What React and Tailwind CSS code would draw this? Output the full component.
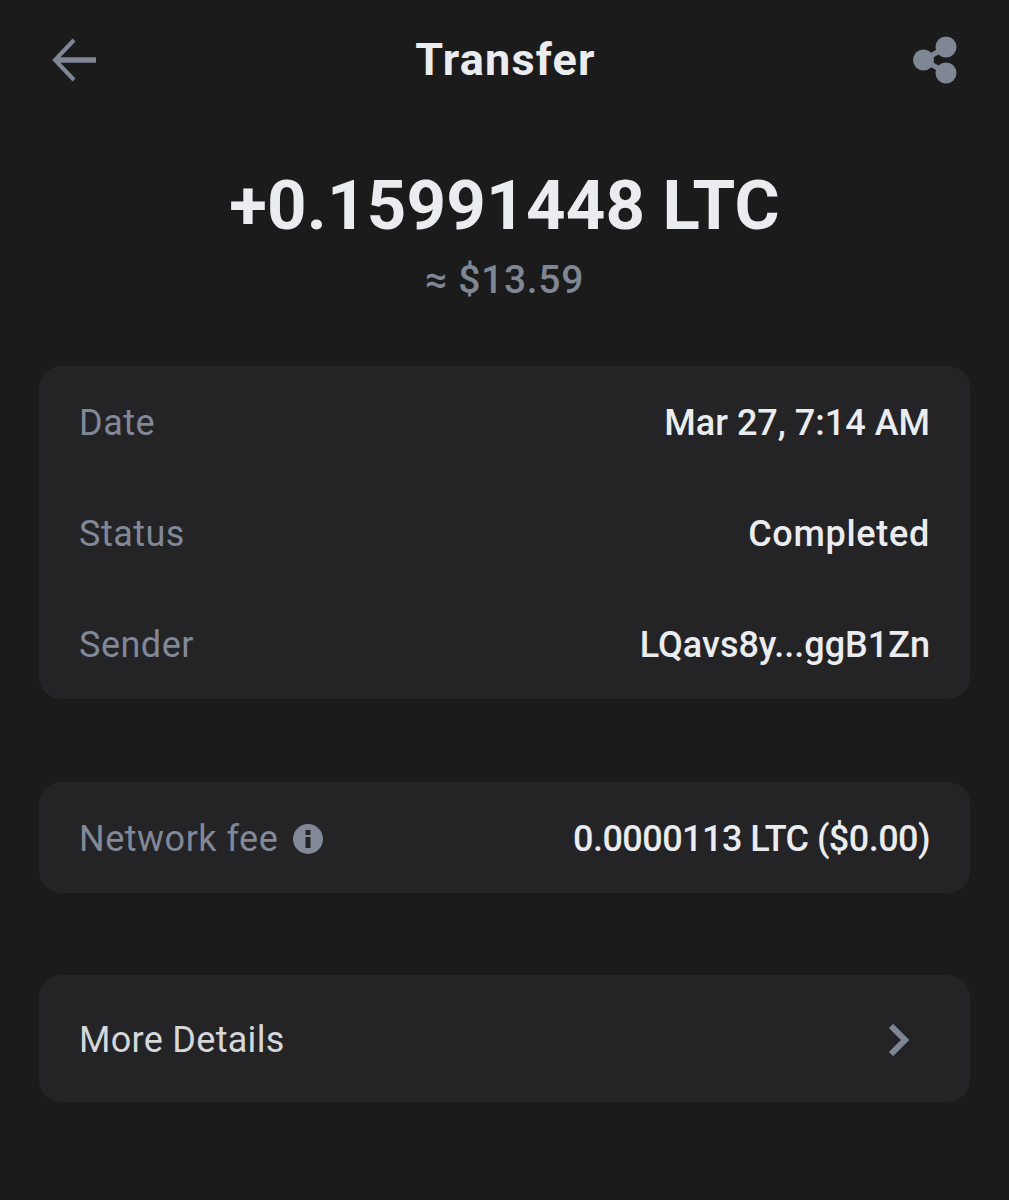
import React from 'react';

const Row = ({ label, value, valueClass = '' }) => (
  <div className="h-[111px] flex items-center justify-between px-10 pt-[3px]">
    <span className="text-[36px] tracking-[0.5px] text-[#818897]">{label}</span>
    <span className={`text-[36px] font-medium text-[#eaecef] ${valueClass}`}>{value}</span>
  </div>
);

export default function App() {
  return (
    <div
      className="w-[1009px] h-[1200px] bg-[#1b1b1c] overflow-hidden"
      style={{ fontFamily: 'Roboto, "Liberation Sans", sans-serif' }}
    >
      {/* header */}
      <div className="h-[120px] flex items-center justify-between px-[50px]">
        <svg width="48" height="48" viewBox="0 0 48 48" fill="none" stroke="#7f8694">
          <path d="M46 24H8" strokeWidth="5.5" />
          <path d="M24 4L5 24l19 20" strokeWidth="4" />
        </svg>
        <h1 className="text-[45px] font-bold text-[#eaecef] tracking-[1.2px]">Transfer</h1>
        <svg width="46" height="48" viewBox="0 0 46 48" fill="#7f8694">
          <circle cx="33" cy="11" r="10.500" />
          <circle cx="10.500" cy="24" r="10.500" />
          <circle cx="33" cy="37" r="10.500" />
          <path d="M11 24L33 11M11 24l22 13" stroke="#7f8694" strokeWidth="5" fill="none" />
        </svg>
      </div>

      {/* amount */}
      <div className="h-[246px] flex flex-col items-center">
        <div className="mt-[49px] text-[69px] leading-[74px] font-bold text-[#eaecef] tracking-[0.2px]">+0.15991448 LTC</div>
        <div className="mt-[14px] text-[39px] leading-[46px] font-medium text-[#7f8694] tracking-[0.7px]">≈ $13.59</div>
      </div>

      {/* cards */}
      <div className="px-[39px] flex flex-col">
        <div className="bg-[#242427] rounded-[22px]">
          <Row label="Date" value="Mar 27, 7:14 AM" />
          <Row label="Status" value="Completed" valueClass="tracking-[0.7px]" />
          <Row label="Sender" value="LQavs8y...ggB1Zn" />
        </div>

        <div className="mt-[83px] h-[111px] bg-[#242427] rounded-[22px] flex items-center justify-between px-10 pt-[3px]">
          <div className="flex items-center gap-[15px]">
            <span className="text-[36px] tracking-[0.5px] text-[#818897]">Network fee</span>
            <svg width="30" height="30" viewBox="0 0 30 30">
              <circle cx="15" cy="15" r="15" fill="#818897" />
              <rect x="12.500" y="6" width="5" height="5" fill="#242427" />
              <rect x="12.500" y="13" width="5" height="11" fill="#242427" />
            </svg>
          </div>
          <span className="text-[36px] font-medium text-[#eaecef] tracking-[-0.55px]">0.0000113 LTC ($0.00)</span>
        </div>

        <div className="mt-[82px] h-[127px] bg-[#242427] rounded-[22px] flex items-center justify-between pl-10 pr-[60px] pt-[2px]">
          <span className="text-[36px] tracking-[0.3px] text-[#d5d7db]">More Details</span>
          <svg width="22" height="32" viewBox="0 0 22 32" fill="none" stroke="#7f8694" strokeWidth="6">
            <path d="M3 2l14 14L3 30" />
          </svg>
        </div>
      </div>
    </div>
  );
}
